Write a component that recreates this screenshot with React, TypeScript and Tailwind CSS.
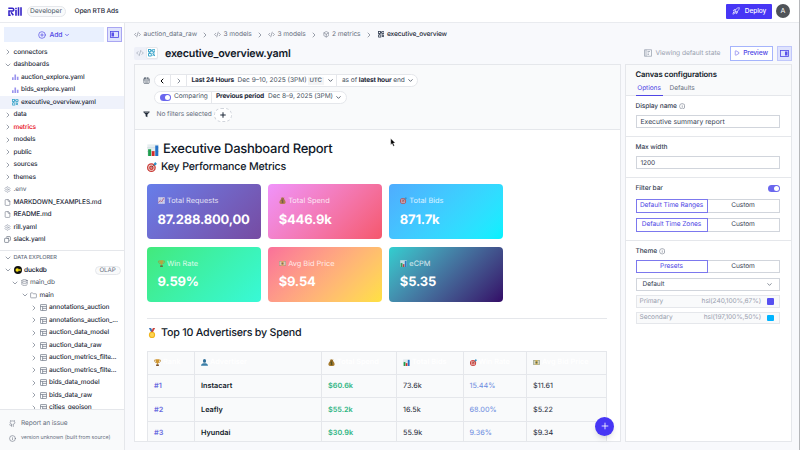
import type { ReactNode } from "react";
import {
  Box,
  CalendarDays,
  ChevronDown,
  ChevronLeft,
  ChevronRight,
  CirclePlus,
  CodeXml,
  Copy,
  Database,
  File,
  Folder,
  Github,
  Info,
  Play,
  Plus,
  Rocket,
  Settings,
} from "lucide-react";
import clsx from "clsx";

type EmojiName =
  | "chart"
  | "target"
  | "trend"
  | "money"
  | "trophy"
  | "cash"
  | "medal"
  | "person";

function Emoji({ name, className }: { name: EmojiName; className?: string }) {
  return (
    <svg viewBox="0 0 16 16" className={clsx("shrink-0", className)}>
      {name === "chart" && (
        <>
          <rect x="0.5" y="0.5" width="15" height="15" fill="#e6eef0" />
          <path d="M0 5h16M0 10h16" stroke="#b9cbd2" strokeWidth="0.6" />
          <rect x="1.5" y="7" width="4" height="9" fill="#1f9d4d" />
          <rect x="6.3" y="9.5" width="3.8" height="6.5" fill="#d42b2b" />
          <rect x="11" y="2" width="4" height="14" fill="#2472c8" />
        </>
      )}
      {name === "target" && (
        <>
          <circle cx="7" cy="9" r="7" fill="#c93a35" />
          <circle cx="7" cy="9" r="5" fill="#f0d9d5" />
          <circle cx="7" cy="9" r="3.6" fill="#c93a35" />
          <circle cx="7" cy="9" r="1.4" fill="#f0d9d5" />
          <path d="M7 9L13 3" stroke="#54433f" strokeWidth="1.1" />
          <path d="M11 5l.5-3.500L14 0l.2 1.900 1.800.4-2 2.700z" fill="#2b8fc4" />
        </>
      )}
      {name === "trend" && (
        <>
          <rect x="0.5" y="0.5" width="15" height="15" fill="#ecebf2" />
          <path d="M5.5 0v16M10.5 0v16M0 5.5h16M0 10.5h16" stroke="#b3b5cf" strokeWidth="0.7" />
          <path d="M1 13l4-5 3 3 6-9" fill="none" stroke="#c94b55" strokeWidth="1.8" />
        </>
      )}
      {name === "money" && (
        <>
          <path
            d="M5.5 4L4 1l3 .8L8.500 0 10 1.800 12.500 1 11 4c3 2.500 4.500 6 4 9-.4 2-2 3-7 3s-6.600-1-7-3c-.5-3 1.500-6.500 4.500-9z"
            fill="#a67a2c"
          />
          <path d="M5 4.5h6.5" stroke="#5c3f14" strokeWidth="1.4" />
          <path
            d="M10 7.8c-2-1.3-4-.7-4 .6 0 1.8 4.2 1.2 4.2 3.1 0 1.4-2.6 1.9-4.400.6M8 6.500v7.300"
            fill="none"
            stroke="#2f3f22"
            strokeWidth="1.1"
          />
        </>
      )}
      {name === "trophy" && (
        <>
          <path d="M4 2.5H1c0 4 1.5 5.5 4 6M12 2.5h3c0 4-1.5 5.5-4 6" fill="none" stroke="#b9822c" strokeWidth="1.5" />
          <path d="M3.5.5h9c0 5-1 8.5-3.5 9.5V12H7v-2C4.500 9 3.500 5.500 3.500.5z" fill="#cf9630" />
          <path d="M5.5 12h5l1 4h-7z" fill="#79502a" />
        </>
      )}
      {name === "cash" && (
        <>
          <rect x="0" y="2.5" width="16" height="10.5" rx="0.8" fill="#8f9a7c" />
          <rect x="1.2" y="3.7" width="13.6" height="8.1" fill="#d3d5c8" />
          <path d="M5.5 2.500h5v10.500h-5z" fill="#d9b24e" />
          <circle cx="8" cy="7.8" r="2.3" fill="#5f6d50" />
        </>
      )}
      {name === "medal" && (
        <>
          <path d="M3 0h3.5l3 6L7 7.500z" fill="#3f74b8" />
          <path d="M13 0H9.5l-3 6L9 7.500z" fill="#c8443f" />
          <circle cx="8" cy="11" r="5" fill="#f0b51f" />
          <circle cx="8" cy="11" r="3.3" fill="#ffd552" />
        </>
      )}
      {name === "person" && (
        <>
          <ellipse cx="8" cy="4.5" rx="3.6" ry="4.3" fill="#2f6f98" />
          <path d="M0 15.5c0-4 3-5.5 5.500-6h5c2.500.5 5.500 2 5.500 6z" fill="#3b7fa8" />
        </>
      )}
    </svg>
  );
}

function CanvasIcon({ className }: { className?: string }) {
  return (
    <svg viewBox="0 0 16 16" fill="none" stroke="currentColor" strokeWidth="2.1" className={className}>
      <rect x="1" y="1" width="5" height="5" />
      <path d="M9 6V1.5h6V6zM1 9.5h6V15H1zM9 9.5l6 5.5M15 9.5L9.500 15M6 3.500h3M3.500 6v3.500M12 6v4" />
    </svg>
  );
}

function ExploreIcon() {
  return (
    <svg viewBox="0 0 12 12" className="size-[6.5px]">
      <path d="M0 6h3v5H0zM4.500 1h3v10h-3zM9 5h3v6H9z" fill="#9a94ee" />
    </svg>
  );
}

function TableIcon() {
  return (
    <svg viewBox="0 0 16 16" fill="none" stroke="currentColor" strokeWidth="1.6" className="ml-[2px] size-[7px] text-gray-500">
      <rect x="1" y="1" width="14" height="14" rx="1.5" />
      <path d="M1 5.5h14M6 5.500V15M6 10h9" />
    </svg>
  );
}

function PanelIcon({ right = false }: { right?: boolean }) {
  return (
    <svg viewBox="0 0 18 14" className="h-[7px] w-[9px]">
      <rect x="1" y="1" width="16" height="12" fill="none" stroke="#4f46e5" strokeWidth="1.6" />
      <rect x={right ? 10 : 3} y="3" width="5" height="8" fill="#5a50e8" />
    </svg>
  );
}

function RillLogo() {
  return (
    <svg viewBox="0 0 42 27" className="h-[9px] w-[14px]">
      <path
        d="M1 4h12c5.500 0 5.500 8 1 8H4M3 10v15h5M9 16l7 9"
        fill="none"
        stroke="#3524c7"
        strokeWidth="4.6"
      />
      <path d="M24 2v4.500M24 9v17M31.500 1v25M39 1v25" stroke="#3524c7" strokeWidth="4.8" />
    </svg>
  );
}

function Header() {
  return (
    <header className="flex h-[23px] shrink-0 items-center border-b border-[#e9ebef] bg-white pl-2 pr-[9px]">
      <RillLogo />
      <span className="ml-[4.5px] flex h-[11px] w-[39px] items-center justify-center rounded-full border border-gray-200 bg-gray-50 pt-[0.5px] text-[6.7px] tracking-[-0.05px] text-gray-600">
        Developer
      </span>
      <span className="ml-[9px] pt-[1.5px] text-[6.6px] font-medium tracking-[-0.15px] text-gray-800">Open RTB Ads</span>
      <button className="ml-auto flex h-[15px] w-[46px] items-center justify-center gap-[5px] rounded-[1px] bg-[#4736f5] text-[6.6px] font-medium tracking-[-0.08px] text-white">
        <Rocket className="size-[8px]" />
        <span className="pt-[1.5px]">Deploy</span>
      </button>
      <span className="ml-[4px] flex size-[14px] items-center justify-center rounded-full bg-[#4f5358] text-[7px] text-white">
        A
      </span>
    </header>
  );
}

type RowProps = {
  label: string;
  icon?: ReactNode;
  className?: string;
};

function FolderRow({ label, open, className }: RowProps & { open?: boolean }) {
  const Chevron = open ? ChevronDown : ChevronRight;
  return (
    <div className="flex h-[12.5px] shrink-0 items-center pl-[4px]">
      <Chevron className="size-[8px] text-gray-500" />
      <span className={clsx("ml-[1.5px] font-medium", className)}>{label}</span>
    </div>
  );
}

function FileRow({ label, icon, className }: RowProps) {
  return (
    <div className={clsx("flex h-[12.5px] shrink-0 items-center gap-[2.5px] font-medium", className)}>
      {icon}
      <span>{label}</span>
    </div>
  );
}

const tables = [
  "annotations_auction",
  "annotations_auction_...",
  "auction_data_model",
  "auction_data_raw",
  "auction_metrics_filte...",
  "auction_metrics_filte...",
  "bids_data_model",
  "bids_data_raw",
  "cities_geojson",
];

function Sidebar() {
  return (
    <aside className="flex w-[125px] shrink-0 flex-col border-r border-[#e5e7eb] bg-white text-[6.5px] tracking-[-0.12px] text-gray-800">
      <div className="flex shrink-0 gap-[3px] pl-[4px] pt-[4px]">
        <button className="flex h-[15px] w-[100px] items-center justify-center gap-[4px] bg-[#e9f0fe] text-[6.8px] font-medium text-[#4f46e5]">
          <CirclePlus className="size-[8px]" />
          <span className="pt-px">Add</span>
          <ChevronDown className="-ml-[2px] size-[6px]" strokeWidth={3} />
        </button>
        <button className="flex size-[15px] items-center justify-center border border-[#a9a6f2] bg-[#dfe3fd]">
          <PanelIcon />
        </button>
      </div>
      <div className="flex h-[207.5px] shrink-0 flex-col overflow-hidden pt-[4px] [&_span]:pt-px">
        <FolderRow label="connectors" />
        <FolderRow label="dashboards" open />
        <FileRow label="auction_explore.yaml" icon={<ExploreIcon />} className="pl-[12px]" />
        <FileRow label="bids_explore.yaml" icon={<ExploreIcon />} className="pl-[12px]" />
        <FileRow
          label="executive_overview.yaml"
          icon={<CanvasIcon className="size-[6.5px] text-[#3ba4c9]" />}
          className="bg-[#eff2fb] pl-[12px]"
        />
        <FolderRow label="data" />
        <FolderRow label="metrics" className="text-red-600" />
        <FolderRow label="models" />
        <FolderRow label="public" />
        <FolderRow label="sources" />
        <FolderRow label="themes" />
        <FileRow
          label=".env"
          icon={<Settings className="size-[7px] text-gray-400" />}
          className="pl-[4px] text-gray-500"
        />
        <FileRow label="MARKDOWN_EXAMPLES.md" icon={<File className="size-[7px] text-gray-500" />} className="pl-[4px]" />
        <FileRow label="README.md" icon={<File className="size-[7px] text-gray-500" />} className="pl-[4px]" />
        <FileRow label="rill.yaml" icon={<Settings className="size-[7px] text-gray-400" />} className="pl-[4px]" />
        <FileRow label="slack.yaml" icon={<Copy className="size-[7px] -scale-x-100 text-gray-600" />} className="pl-[4px]" />
      </div>
      <div className="flex min-h-0 flex-1 flex-col overflow-hidden border-t border-gray-200 pt-[1px] [&_span]:pt-px">
        <div className="flex h-[12.5px] shrink-0 items-center pl-[4px] text-[5.6px] font-medium text-gray-500">
          <ChevronDown className="size-[8px]" />
          <span className="ml-[1.5px]">DATA EXPLORER</span>
        </div>
        <div className="flex h-[12.5px] shrink-0 items-center pl-[4px] pr-[3.5px]">
          <ChevronDown className="size-[8px] text-gray-500" />
          <svg viewBox="0 0 16 16" className="ml-[1.5px] size-[8px]">
            <circle cx="8" cy="8" r="8" fill="#111" />
            <circle cx="6.5" cy="8" r="3.5" fill="#f7e017" />
            <path d="M10 6.500h2.500a1.500 1.500 0 010 3H10z" fill="#f7e017" />
          </svg>
          <span className="ml-[2.5px] font-semibold">duckdb</span>
          <span className="ml-auto flex h-[9px] w-[26px] items-center justify-center rounded-full border border-gray-200 bg-gray-50 text-[6.2px] text-gray-500">
            OLAP
          </span>
        </div>
        <div className="flex h-[12.5px] shrink-0 items-center pl-[11px]">
          <ChevronDown className="size-[8px] text-gray-500" />
          <Database className="ml-[1.5px] size-[7px] text-gray-500" />
          <span className="ml-[2.5px] text-gray-600">main_db</span>
        </div>
        <div className="flex h-[12.5px] shrink-0 items-center pl-[20.5px]">
          <ChevronDown className="size-[8px] text-gray-500" />
          <Folder className="ml-[1.5px] size-[7px] text-gray-500" />
          <span className="ml-[2.5px]">main</span>
        </div>
        {tables.map((name, i) => (
          <div key={i} className="flex h-[12.5px] shrink-0 items-center pl-[30px]">
            <ChevronRight className="size-[8px] text-gray-500" />
            <TableIcon />
            <span className="ml-[2px] font-medium">{name}</span>
          </div>
        ))}
      </div>
      <div className="h-[41px] shrink-0 border-t border-gray-200 bg-[#f9fafb] pl-[9px] pt-[6px] text-gray-500">
        <div className="flex h-[14px] items-center gap-[5px] text-[6.6px]">
          <Github className="size-[7px]" />
          <span className="pt-px">Report an issue</span>
        </div>
        <div className="mt-[1px] flex h-[14px] items-center gap-[5px] text-[5.4px] tracking-[-0.08px]">
          <Info className="size-[7px]" />
          <span className="pt-px">version unknown (built from source)</span>
        </div>
      </div>
    </aside>
  );
}

function Breadcrumbs() {
  return (
    <div className="flex h-[11px] items-center text-[6.6px] tracking-[-0.06px] text-gray-500">
      <CodeXml className="size-[7px]" />
      <span className="ml-[3px] w-[53px]">auction_data_raw</span>
      <ChevronRight className="ml-[4.5px] size-[8px]" />
      <CodeXml className="ml-[4.5px] size-[7px]" />
      <span className="ml-[3px] w-[28px]">3 models</span>
      <ChevronRight className="ml-[4px] size-[8px]" />
      <CodeXml className="ml-[4px] size-[7px]" />
      <span className="ml-[3px] w-[28px]">3 models</span>
      <ChevronRight className="ml-[4px] size-[8px]" />
      <Box className="ml-[5px] size-[6.5px]" />
      <span className="ml-[3px] w-[28px]">2 metrics</span>
      <ChevronRight className="ml-[4.5px] size-[8px]" />
      <CanvasIcon className="ml-[5px] size-[6.5px] text-gray-700" />
      <span className="ml-[3px] font-medium tracking-[-0.12px] text-gray-800">executive_overview</span>
    </div>
  );
}

function TitleBar() {
  return (
    <div className="mt-[5.5px] flex h-[15px] items-center">
      <div className="flex h-[13px] w-[24px] items-center rounded-[2px] bg-[#eef0f8] pl-[2.5px]">
        <CodeXml className="size-[8px] text-gray-400" />
        <span className="ml-[1.5px] flex h-[12px] w-[12px] items-center justify-center rounded-[2px] border border-gray-200 bg-white">
          <CanvasIcon className="size-[7.5px] text-[#3ba4c9]" />
        </span>
      </div>
      <h1 className="ml-[7.5px] pt-[1.5px] text-[10.7px] font-semibold tracking-[-0.18px] text-gray-900">
        executive_overview.yaml
      </h1>
      <div className="ml-auto flex items-center text-[6.7px] tracking-[-0.08px] text-gray-400">
        <svg viewBox="0 0 16 16" fill="none" stroke="currentColor" strokeWidth="1.5" className="size-[8px]">
          <path d="M1 1.500h14v13H1zM4 1.500v13M7 5h5M7 8h3M7 11h3" />
        </svg>
        <span className="ml-[4px] w-[64px] pt-[0.5px]">Viewing default state</span>
      </div>
      <button className="ml-[10px] flex h-[15px] w-[43px] items-center justify-center gap-[3px] border border-[#a5b4fc] bg-white text-[6.7px] font-medium tracking-[-0.1px] text-[#4f46e5]">
        <Play className="size-[6px]" />
        <span className="pt-[0.5px]">Preview</span>
      </button>
      <button className="ml-[4px] flex size-[15px] items-center justify-center border border-[#c0c7fb] bg-[#dfe3fd]">
        <PanelIcon right />
      </button>
    </div>
  );
}

function Toggle() {
  return (
    <span className="flex h-[6.5px] w-[11.5px] items-center justify-end rounded-full bg-[#6a67ee] p-[0.7px]">
      <span className="size-[5px] rounded-full bg-white" />
    </span>
  );
}

function Filters() {
  return (
    <div className="h-[65px] shrink-0 border-b border-gray-200 bg-[#f9fafb] pl-[8px] pt-[8.5px] text-[6.6px] tracking-[-0.08px] text-gray-600">
      <div className="flex h-[14px] items-center">
        <CalendarDays className="size-[7px] text-gray-700" />
        <div className="ml-[4px] flex h-[13.5px] items-center rounded-full border border-gray-200 bg-white">
          <span className="flex h-full w-[16.5px] items-center justify-center border-r border-gray-200">
            <ChevronLeft className="size-[8px] text-black" strokeWidth={3} />
          </span>
          <span className="flex h-full w-[16px] items-center justify-center border-r border-gray-200">
            <ChevronRight className="size-[8px] text-gray-600" />
          </span>
          <span className="flex h-full w-[150px] items-center border-r border-gray-200 pl-[4.5px]">
            <b className="w-[43px] font-bold tracking-[-0.17px] text-gray-800">Last 24 Hours</b>
            <span className="ml-[3px] w-[67px] tracking-normal">Dec 9–10, 2025 (3PM)</span>
            <span className="ml-[3px] bg-gray-100 px-[2px] text-[6px] font-medium leading-[8px]">UTC</span>
            <ChevronDown className="ml-[3.5px] size-[7px]" strokeWidth={3} />
          </span>
          <span className="flex w-[80px] items-center pl-[5px]">
            as of&nbsp;<b className="font-bold tracking-[-0.17px] text-gray-800">latest hour</b>&nbsp;end
            <ChevronDown className="ml-[2px] size-[7px]" strokeWidth={3} />
          </span>
        </div>
      </div>
      <div className="ml-[11px] mt-[3px] flex h-[13.5px] w-[193px] items-center rounded-full border border-gray-200 bg-white pl-[5px]">
        <Toggle />
        <span className="ml-[3px] w-[37px]">Comparing</span>
        <span className="flex h-full items-center border-l border-gray-200 pl-[4px]">
          <b className="w-[49px] font-bold tracking-[-0.17px] text-gray-800">Previous period</b>
          <span className="ml-[3px] w-[65px]">Dec 8–9, 2025 (3PM)</span>
          <ChevronDown className="ml-[2px] size-[7px]" strokeWidth={3} />
        </span>
      </div>
      <div className="mt-[3px] flex h-[15px] items-center">
        <svg viewBox="0 0 16 16" className="size-[7px]">
          <path d="M1 1h14v2l-5 5v6.500L6 12V8L1 3z" fill="#1f2937" />
          <path d="M3.500 3h9" stroke="#fff" />
        </svg>
        <span className="ml-[7px] w-[54px] pt-px text-gray-500">No filters selected</span>
        <span className="ml-[3.5px] flex h-[14px] w-[18px] items-center justify-center rounded-full border border-dashed border-gray-300 bg-white">
          <Plus className="size-[8px] text-gray-800" strokeWidth={3} />
        </span>
      </div>
    </div>
  );
}

const metrics: { icon: EmojiName; label: string; value: string; bg: string }[] = [
  { icon: "trend", label: "Total Requests", value: "87.288.800,00", bg: "from-[#667eea] to-[#764ba2]" },
  { icon: "money", label: "Total Spend", value: "$446.9k", bg: "from-[#f093fb] to-[#f5576c]" },
  { icon: "target", label: "Total Bids", value: "871.7k", bg: "from-[#4facfe] to-[#00f2fe]" },
  { icon: "trophy", label: "Win Rate", value: "9.59%", bg: "from-[#43e97b] to-[#38f9d7]" },
  { icon: "cash", label: "Avg Bid Price", value: "$9.54", bg: "from-[#fa709a] to-[#fee140]" },
  { icon: "chart", label: "eCPM", value: "$5.35", bg: "from-[#30cfd0] to-[#330867]" },
];

const columns: { icon: EmojiName; label: string }[] = [
  { icon: "trophy", label: "Rank" },
  { icon: "person", label: "Advertiser" },
  { icon: "money", label: "Total Spend" },
  { icon: "chart", label: "Total Bids" },
  { icon: "target", label: "Win Rate" },
  { icon: "cash", label: "Avg Bid Price" },
];

const rows = [
  ["#1", "Instacart", "$60.6k", "73.6k", "15.44%", "$11.61"],
  ["#2", "Leafly", "$55.2k", "16.5k", "68.00%", "$5.22"],
  ["#3", "Hyundai", "$30.9k", "55.9k", "9.36%", "$9.34"],
];

const cellStyles = [
  "font-semibold text-[#6a6ce0]",
  "font-semibold text-gray-900",
  "font-semibold text-[#2fb583]",
  "text-gray-800",
  "text-[#6b8be0]",
  "text-gray-800",
];

const tableGrid = "grid grid-cols-[47px_127px_75px_66.5px_63.5px_80px]";

function Report() {
  return (
    <div className="min-h-0 flex-1 overflow-hidden bg-white pl-[12.5px] pt-[11px] text-gray-900">
      <h2 className="flex h-[18px] items-center gap-[4px] text-[13px] font-medium tracking-[-0.27px]">
        <Emoji name="chart" className="size-[12px]" />
        Executive Dashboard Report
      </h2>
      <h3 className="flex h-[16px] items-center gap-[4px] text-[10.7px] font-medium tracking-[-0.2px]">
        <Emoji name="target" className="size-[10px]" />
        Key Performance Metrics
      </h3>
      <div className="mt-[9px] grid w-[356px] grid-cols-3 gap-[7.5px]">
        {metrics.map((m) => (
          <div
            key={m.label}
            className={clsx("h-[55px] rounded-[4px] bg-linear-135 pl-[10.5px] pt-[10.5px] text-white", m.bg)}
          >
            <div className="flex h-[12px] items-center gap-[2.5px] text-[7.4px] opacity-80">
              <Emoji name={m.icon} className="size-[7px]" />
              <span className="pt-px">{m.label}</span>
            </div>
            <div className="mt-[4px] h-[18px] text-[13px] font-bold leading-[18px] tracking-[-0.2px]">{m.value}</div>
          </div>
        ))}
      </div>
      <hr className="mt-[16px] w-[460px] border-t-[1.5px] border-gray-200" />
      <h3 className="mt-[6.5px] flex h-[16px] items-center gap-[4px] text-[10.7px] font-medium tracking-[-0.22px]">
        <Emoji name="medal" className="size-[10px]" />
        Top 10 Advertisers by Spend
      </h3>
      <div className="mt-[9.5px] w-[460px] border-l border-t border-gray-200 bg-[#f9fafb] text-[7.3px]">
        <div className={tableGrid}>
          {columns.map((c) => (
            <div
              key={c.label}
              className="flex h-[23.4px] items-center gap-[2px] border-b border-r border-gray-200 pl-[6px] font-semibold text-white"
            >
              <Emoji name={c.icon} className="size-[7px]" />
              {c.label}
            </div>
          ))}
        </div>
        {rows.map((row) => (
          <div key={row[0]} className={tableGrid}>
            {row.map((cell, i) => (
              <div
                key={i}
                className={clsx("flex h-[23.4px] items-center border-b border-r border-gray-200 pl-[6px] pt-[1.5px]", cellStyles[i])}
              >
                {cell}
              </div>
            ))}
          </div>
        ))}
      </div>
    </div>
  );
}

function Choice({ left, right = "Custom" }: { left: string; right?: string }) {
  return (
    <div className="grid h-[13px] grid-cols-2 leading-[11.5px]">
      <span className="border border-[#7c78ee] text-center text-[#4f46e5]">{left}</span>
      <span className="border border-l-0 border-gray-300 text-center text-gray-700">{right}</span>
    </div>
  );
}

function ColorField({ label, value, swatch }: { label: string; value: string; swatch: string }) {
  return (
    <div className="flex h-[12.5px] items-center border border-gray-200 bg-gray-50 pl-[3px] pr-[5px] text-gray-400">
      <span className="pt-px">{label}</span>
      <span className="ml-auto pt-px">{value}</span>
      <span className={clsx("ml-[6px] size-[6.5px] rounded-[1px]", swatch)} />
    </div>
  );
}

function Inspector() {
  return (
    <section className="w-[167px] shrink-0 border border-gray-200 bg-white text-[6.6px] tracking-[-0.08px] text-gray-700">
      <div className="h-[31px] border-b border-gray-200 bg-[#f9fafb] pl-[10px] pt-[4px]">
        <h2 className="text-[7.7px] font-semibold leading-[11px] tracking-[-0.12px] text-gray-900">Canvas configurations</h2>
        <div className="mt-[2px] flex h-[14px] leading-[12px]">
          <span className="w-[27px] border-b border-[#4f46e5] text-center text-[#4f46e5]">Options</span>
          <span className="ml-[7px] text-gray-500">Defaults</span>
        </div>
      </div>
      <div className="h-[41px] border-b border-gray-200 pl-[10px] pr-[11px] pt-[5px]">
        <div className="flex h-[10px] items-center gap-[2px] font-medium">
          <span className="pt-px">Display name</span> <Info className="size-[6.5px] text-gray-500" />
        </div>
        <div className="mt-[3.5px] h-[13.5px] border border-gray-300 pl-[4px] text-[6.8px] leading-[12px] tracking-normal">
          Executive summary report
        </div>
      </div>
      <div className="h-[41px] border-b border-gray-200 pl-[10px] pr-[11px] pt-[5px]">
        <div className="h-[10px] font-medium leading-[11px]">Max width</div>
        <div className="mt-[3.5px] h-[13.5px] border border-gray-300 pl-[4px] leading-[12px]">1200</div>
      </div>
      <div className="h-[63px] border-b border-gray-200 pl-[10px] pr-[11px] pt-[5px]">
        <div className="mb-[5px] flex h-[11px] items-center justify-between font-medium">
          Filter bar <Toggle />
        </div>
        <Choice left="Default Time Ranges" />
        <div className="h-[6px]" />
        <Choice left="Default Time Zones" />
      </div>
      <div className="pl-[10px] pr-[11px] pt-[5.5px]">
        <div className="flex h-[10px] items-center gap-[2px] font-medium">
          <span className="pt-px">Theme</span> <Info className="size-[6.5px] text-gray-500" />
        </div>
        <div className="h-[3px]" />
        <Choice left="Presets" />
        <div className="mb-[4px] mt-[5.5px] flex h-[13px] items-center justify-between border border-gray-300 pl-[6px] pr-[6px]">
          <span className="pt-px">Default</span>
          <ChevronDown className="size-[7px]" />
        </div>
        <ColorField label="Primary" value="hsl(240,100%,67%)" swatch="bg-[#5650f0]" />
        <div className="h-[4px]" />
        <ColorField label="Secondary" value="hsl(197,100%,50%)" swatch="bg-[#00b4ff]" />
      </div>
    </section>
  );
}

export default function App() {
  return (
    <div className="relative flex h-[450px] w-[800px] flex-col overflow-hidden whitespace-nowrap border-r border-[#b5b7ba] bg-white font-['Inter',sans-serif] [text-rendering:geometricPrecision]">
      <Header />
      <div className="flex min-h-0 flex-1">
        <Sidebar />
        <main className="flex min-w-0 flex-1 flex-col bg-[#f8f9fc] pb-[8px] pl-[8.5px] pr-[7.5px] pt-[6px]">
          <Breadcrumbs />
          <TitleBar />
          <div className="mt-[3.5px] flex min-h-0 flex-1 justify-between">
            <section className="flex w-[487px] flex-col border border-gray-200">
              <Filters />
              <Report />
            </section>
            <Inspector />
          </div>
        </main>
      </div>
      <button className="absolute left-[595px] top-[416.5px] flex size-[19px] items-center justify-center rounded-full bg-[#4736f5] shadow-md">
        <Plus className="size-[10px] text-white" />
      </button>
      <svg viewBox="0 0 10 16" className="absolute left-[389.5px] top-[138px] h-[9px] w-[6px]">
        <path d="M1 1v11l2.500-2.300 2 4.800 2-.9-2-4.600H9z" fill="#000" stroke="#fff" strokeWidth="0.6" />
      </svg>
    </div>
  );
}
